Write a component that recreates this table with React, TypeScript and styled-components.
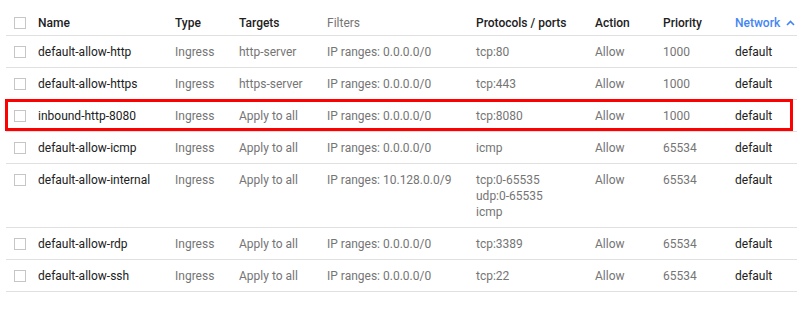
import React from "react";
import styled, { createGlobalStyle } from "styled-components";

const GlobalStyle = createGlobalStyle`
  html, body { margin: 0; padding: 0; background: #ffffff; }
  body { font-family: Roboto, "Noto Sans", Arial, sans-serif; -webkit-font-smoothing: antialiased; }
`;

const COLS = "32px 137px 64px 88px 149px 119px 68px 72px 62px";

const Page = styled.div`
  padding: 0 9px 0 6px;
  width: 791px;
`;

const Grid = styled.div`
  display: flex;
  flex-direction: column;
`;

const HeaderRow = styled.div`
  display: grid;
  grid-template-columns: ${COLS};
  border-bottom: 1px solid #e0e0e0;
  align-items: start;
  padding-top: 15px;
  height: 20px;
`;

const Row = styled.div`
  position: relative;
  display: grid;
  grid-template-columns: ${COLS};
  padding: 8px 0 7px;
  border-bottom: 1px solid #e0e0e0;
  align-items: start;
`;

const Highlight = styled.div`
  position: absolute;
  left: -1px;
  right: 4px;
  top: -1px;
  bottom: 0;
  border: 3px solid #ff0000;
  pointer-events: none;
`;

const HeadCell = styled.div<{ $tone?: "dark" | "muted" | "link" }>`
  font-size: 12px;
  line-height: 16px;
  font-weight: ${(p) => (p.$tone === "muted" ? 400 : 500)};
  color: ${(p) =>
    p.$tone === "muted" ? "#757575" : p.$tone === "link" ? "#4285f4" : "#212121"};
  white-space: nowrap;
  display: flex;
  align-items: center;
`;

const Cell = styled.div<{ $tone?: "dark" | "muted" }>`
  font-size: 12px;
  line-height: 16px;
  color: ${(p) => (p.$tone === "dark" ? "#212121" : "#757575")};
  white-space: nowrap;
`;

const CheckCell = styled.div`
  padding-left: 8px;
  padding-top: 2px;
`;

const Checkbox = styled.span`
  display: block;
  width: 10px;
  height: 10px;
  border: 1px solid #c6c6c6;
  background: #fff;
`;

const Caret = styled.svg`
  margin-left: 6px;
  width: 9px;
  height: 6px;
`;

type Rule = {
  name: string;
  targets: string;
  filters: string;
  ports: string[];
  priority: string;
  highlight?: boolean;
};

const rules: Rule[] = [
  { name: "default-allow-http", targets: "http-server", filters: "IP ranges: 0.0.0.0/0", ports: ["tcp:80"], priority: "1000" },
  { name: "default-allow-https", targets: "https-server", filters: "IP ranges: 0.0.0.0/0", ports: ["tcp:443"], priority: "1000" },
  { name: "inbound-http-8080", targets: "Apply to all", filters: "IP ranges: 0.0.0.0/0", ports: ["tcp:8080"], priority: "1000", highlight: true },
  { name: "default-allow-icmp", targets: "Apply to all", filters: "IP ranges: 0.0.0.0/0", ports: ["icmp"], priority: "65534" },
  { name: "default-allow-internal", targets: "Apply to all", filters: "IP ranges: 10.128.0.0/9", ports: ["tcp:0-65535", "udp:0-65535", "icmp"], priority: "65534" },
  { name: "default-allow-rdp", targets: "Apply to all", filters: "IP ranges: 0.0.0.0/0", ports: ["tcp:3389"], priority: "65534" },
  { name: "default-allow-ssh", targets: "Apply to all", filters: "IP ranges: 0.0.0.0/0", ports: ["tcp:22"], priority: "65534" },
];

export default function App() {
  return (
    <>
      <GlobalStyle />
      <Page>
        <Grid>
          <HeaderRow>
            <CheckCell>
              <Checkbox />
            </CheckCell>
            <HeadCell>Name</HeadCell>
            <HeadCell>Type</HeadCell>
            <HeadCell>Targets</HeadCell>
            <HeadCell $tone="muted">Filters</HeadCell>
            <HeadCell>Protocols / ports</HeadCell>
            <HeadCell>Action</HeadCell>
            <HeadCell>Priority</HeadCell>
            <HeadCell $tone="link">
              Network
              <Caret viewBox="0 0 9 6">
                <path d="M1 5 L4.5 1.5 L8 5" fill="none" stroke="#4285f4" strokeWidth="1.6" />
              </Caret>
            </HeadCell>
          </HeaderRow>
          {rules.map((r) => (
            <Row key={r.name}>
              <CheckCell>
                <Checkbox />
              </CheckCell>
              <Cell $tone="dark">{r.name}</Cell>
              <Cell>Ingress</Cell>
              <Cell>{r.targets}</Cell>
              <Cell>{r.filters}</Cell>
              <Cell>
                {r.ports.map((p) => (
                  <div key={p}>{p}</div>
                ))}
              </Cell>
              <Cell>Allow</Cell>
              <Cell>{r.priority}</Cell>
              <Cell $tone="dark">default</Cell>
              {r.highlight && <Highlight />}
            </Row>
          ))}
        </Grid>
      </Page>
    </>
  );
}
